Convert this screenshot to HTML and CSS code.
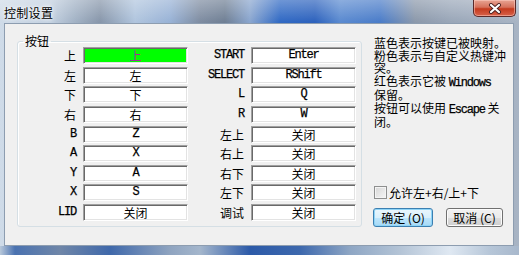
FILE: index.html
```html
<!DOCTYPE html>
<html lang="zh-CN">
<head>
    <meta charset="UTF-8">
    <title>控制设置</title>
    <link rel="stylesheet" href="styles.css">
</head>
<body>
    <div class="window">
        <div class="titlebar">
            <span class="title">控制设置</span>
            <span class="close">
                <svg width="14" height="11" viewBox="0 0 14 11">
                    <path d="M3 2 L11 9 M11 2 L3 9" stroke="#4a2020" stroke-width="4" stroke-linecap="round"/>
                    <path d="M3 2 L11 9 M11 2 L3 9" stroke="#ffffff" stroke-width="2.2" stroke-linecap="round"/>
                </svg>
            </span>
        </div>
        <div class="client">
            <fieldset class="group">
                <legend>按钮</legend>
                <div class="keys">
                    <label class="key-name">上</label><div class="field active">上</div>
                    <label class="key-name en">START</label><div class="field en">Enter</div>

                    <label class="key-name">左</label><div class="field">左</div>
                    <label class="key-name en">SELECT</label><div class="field en">RShift</div>

                    <label class="key-name">下</label><div class="field">下</div>
                    <label class="key-name en">L</label><div class="field en">Q</div>

                    <label class="key-name">右</label><div class="field">右</div>
                    <label class="key-name en">R</label><div class="field en">W</div>

                    <label class="key-name en">B</label><div class="field en">Z</div>
                    <label class="key-name">左上</label><div class="field">关闭</div>

                    <label class="key-name en">A</label><div class="field en">X</div>
                    <label class="key-name">右上</label><div class="field">关闭</div>

                    <label class="key-name en">Y</label><div class="field en">A</div>
                    <label class="key-name">右下</label><div class="field">关闭</div>

                    <label class="key-name en">X</label><div class="field en">S</div>
                    <label class="key-name">左下</label><div class="field">关闭</div>

                    <label class="key-name en">LID</label><div class="field">关闭</div>
                    <label class="key-name">调试</label><div class="field">关闭</div>
                </div>
            </fieldset>
            <div class="panel">
                <p class="note">
                    蓝色表示按键已被映射。<br>
                    粉色表示与自定义热键冲<br>
                    突。<br>
                    红色表示它被 <span class="en">Windows</span><br>
                    保留。<br>
                    按钮可以使用 <span class="en">Escape</span> 关<br>
                    闭。
                </p>
                <label class="check"><span class="box"></span>允许左+右/上+下</label>
                <div class="buttons">
                    <button class="btn default">确定 (O)</button>
                    <button class="btn cancel">取消 (C)</button>
                </div>
            </div>
        </div>
    </div>
</body>
</html>
```

FILE: styles.css
```css
body {
    margin: 0;
    font-family: "Noto Sans CJK SC", sans-serif;
    font-size: 12px;
    color: #000;
}
.window {
    width: 519px;
    height: 255px;
    display: flex;
    flex-direction: column;
    background:
        linear-gradient(90deg, #b8c8da 0, #4a72b0 15px, #6f86a8 60px, #3f68aa 110px, #8fa4c0 170px, #a4b6cc 200px, #2c5aa8 250px, #3d68ad 300px, #8ea6c4 350px, #b4c4d6 400px, #dfe8f2 450px, #b6c6d8 490px, #a8b8cc 519px) bottom / 100% 9px no-repeat,
        linear-gradient(180deg, rgba(255, 255, 255, 0.3) 0, rgba(255, 255, 255, 0) 22px),
        linear-gradient(90deg, #cfdbe8 0, #c2d0e0 50px, #a2b2c5 75px, #8796aa 100px, #b0c5de 135px, #98b2d6 170px, #7e8ca1 200px, #6f7f94 225px, #8aa6cf 250px, #3069c4 280px, #2d62bd 315px, #5a8ad0 340px, #4a7cc9 380px, #8b98aa 415px, #99a6b8 450px, #a8b4c4 519px);
}
.titlebar {
    height: 27px;
    display: flex;
    align-items: flex-start;
}
.title {
    margin: 5px 0 0 4px;
    font-size: 12px;
    line-height: 16px;
    letter-spacing: 0.3px;
    text-shadow: 0 0 6px #fff, 0 0 3px #fff;
}
.close {
    margin-left: auto;
    margin-right: 3px;
    width: 43px;
    height: 17px;
    box-sizing: border-box;
    display: flex;
    align-items: center;
    justify-content: center;
    border: 1px solid #5a2a2a;
    border-top: none;
    border-radius: 0 0 5px 5px;
    background: linear-gradient(180deg, #e8a493 0, #d6715c 45%, #c43a1e 55%, #d8624a 100%);
    box-shadow: inset 0 0 0 1px rgba(255, 210, 200, 0.5);
}
.client {
    flex: 1;
    margin: 0 5px 9px 4px;
    border: 1px solid #8d9db0;
    background: #f0f0f0;
    display: flex;
    padding: 11px 0 18px 12px;
}
.group {
    margin: 0;
    padding: 0 0 5px 0;
    width: 345px;
    height: 192px;
    box-sizing: border-box;
    border: 1px solid #d5dfe5;
    border-radius: 3px;
    box-shadow: inset 1px 1px 0 #fff;
}
.group legend {
    margin-left: 5px;
    padding: 0 2px;
    line-height: 12px;
}
.keys {
    display: grid;
    grid-template-columns: 65px 105px 63px 105px;
    grid-auto-rows: 17px;
    row-gap: 2.625px;
}
.key-name {
    text-align: right;
    padding-right: 7px;
    line-height: 17px;
}
.field {
    box-sizing: border-box;
    background: #fff;
    border: 1px solid;
    border-color: #a0a0a0 #ffffff #ffffff #a0a0a0;
    box-shadow: inset 1px 1px 0 #696969, inset -1px -1px 0 #e3e3e3;
    text-align: center;
    line-height: 15px;
}
.field.active {
    background: #00ff00;
    color: #a2309a;
}
.en {
    font-family: "Liberation Mono", monospace;
    font-size: 12px;
    letter-spacing: -1.2px;
    -webkit-text-stroke: 0.25px #000;
}
.panel {
    margin-left: 12px;
    width: 135px;
    display: flex;
    flex-direction: column;
}
.note {
    margin: 2px 0 0 0;
    line-height: 12.5px;
    white-space: nowrap;
}
.check {
    margin-top: auto;
    height: 14px;
    display: flex;
    align-items: center;
    gap: 2px;
}
.box {
    width: 11px;
    height: 11px;
    border: 1px solid #8e8f8f;
    background: linear-gradient(135deg, #d6d6d6, #f6f6f6);
    box-shadow: inset 0 0 0 1px #f4f4f4;
}
.buttons {
    margin-top: 9px;
    display: flex;
    gap: 13px;
}
.btn {
    height: 19px;
    padding: 0;
    font-family: "Noto Sans CJK SC", sans-serif;
    font-size: 12px;
    line-height: 16px;
    color: #000;
    border: 1px solid #707070;
    border-radius: 3px;
    background: linear-gradient(180deg, #f2f2f2 0, #ebebeb 50%, #dddddd 50%, #cfcfcf 100%);
    box-shadow: inset 0 0 0 1px #fcfcfc;
}
.btn.default {
    margin-left: -1px;
    width: 60px;
    border-color: #3c7fb1;
    background: linear-gradient(180deg, #eaf6fd 0, #d9f0fc 50%, #bee6fd 50%, #a7d9f5 100%);
    box-shadow: inset 0 0 0 1px #8ed4f7;
}
.btn.cancel {
    width: 57px;
}
```
